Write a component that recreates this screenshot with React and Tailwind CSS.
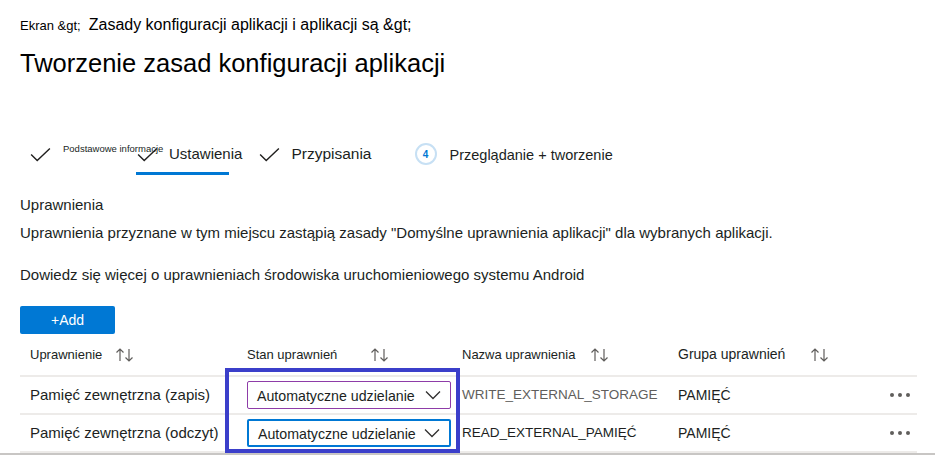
import React from 'react';

const Check = ({ className }) => (
  <svg viewBox="0 0 22 16" className={className} fill="none" stroke="#201f1e" strokeWidth="1.5">
    <polyline points="1,8 7.5,14.5 21,1.5" />
  </svg>
);

const SortIcon = () => (
  <svg viewBox="0 0 20 16" className="w-[20px] h-[16px]" fill="none" stroke="#605e5c" strokeWidth="1.2">
    <path d="M5 14 V2 M1.5 5.5 L5 2 L8.5 5.5" />
    <path d="M14 2 V14 M10.5 10.5 L14 14 L17.5 10.5" />
  </svg>
);

const Chevron = () => (
  <svg viewBox="0 0 16 10" className="w-[16px] h-[10px]" fill="none" stroke="#323130" strokeWidth="1.3">
    <polyline points="1,1.5 8,8.5 15,1.5" />
  </svg>
);

const Dots = () => (
  <div className="flex gap-[4px]">
    <span className="w-[4px] h-[4px] rounded-full bg-[#605e5c]" />
    <span className="w-[4px] h-[4px] rounded-full bg-[#605e5c]" />
    <span className="w-[4px] h-[4px] rounded-full bg-[#605e5c]" />
  </div>
);

const rows = [
  { name: 'Pamięć zewnętrzna (zapis)', perm: 'WRITE_EXTERNAL_STORAGE', permColor: 'text-[#605e5c]', group: 'PAMIĘĆ', border: 'border-[1.5px] border-[#8e3ca8]' },
  { name: 'Pamięć zewnętrzna (odczyt)', perm: 'READ_EXTERNAL_PAMIĘĆ', permColor: 'text-[#201f1e]', group: 'PAMIĘĆ', border: 'border-2 border-[#0078d4]' },
];

export default function App() {
  return (
    <div className="w-[935px] h-[455px] overflow-hidden bg-white text-[#000] pt-[13px]" style={{ fontFamily: '"Liberation Sans", Arial, sans-serif' }}>
      <div className="pl-[20px]">
        <div className="flex items-baseline h-[22px]">
          <span className="text-[13px]">Ekran &amp;gt;</span>
          <span className="text-[16px] ml-[8px]">Zasady konfiguracji aplikacji i aplikacji są &amp;gt;</span>
        </div>

        <h1 className="text-[25.5px] leading-[30px] mt-[13px]">Tworzenie zasad konfiguracji aplikacji</h1>

        <div className="flex items-center h-[40px] mt-[56px]">
          <Check className="w-[21px] h-[15px] ml-[10px]" />
          <span className="text-[9.5px] ml-[12px] w-[72px] whitespace-nowrap self-start mt-[8px] text-[#201f1e]">Podstawowe informacje</span>
          <div className="relative flex items-center h-full">
            <Check className="w-[21px] h-[15px] ml-[2px]" />
            <span className="text-[15px] ml-[11px] mt-[1px] text-[#201f1e]">Ustawienia</span>
            <div className="absolute left-[1px] bottom-[-1px] w-[93px] h-[3px] bg-[#0078d4]" />
          </div>
          <Check className="w-[21px] h-[15px] ml-[17px]" />
          <span className="text-[15.5px] ml-[11px] text-[#201f1e]">Przypisania</span>
          <div className="ml-[43px] w-[22px] h-[22px] rounded-full border-2 border-[#c7e0f4] flex items-center justify-center">
            <span className="text-[10px] font-bold text-[#0078d4]">4</span>
          </div>
          <span className="text-[14.5px] ml-[13px] mt-[4px] text-[#201f1e]">Przeglądanie + tworzenie</span>
        </div>

        <div className="mt-[21px] text-[15px] text-[#201f1e]">
          <p className="leading-[20px]">Uprawnienia</p>
          <p className="leading-[20px] mt-[8px]">Uprawnienia przyznane w tym miejscu zastąpią zasady "Domyślne uprawnienia aplikacji" dla wybranych aplikacji.</p>
          <p className="leading-[20px] mt-[22px]">Dowiedz się więcej o uprawnieniach środowiska uruchomieniowego systemu Android</p>
        </div>

        <button className="mt-[21px] w-[95px] h-[28px] rounded-[2px] bg-[#0078d4] text-white text-[14px] flex items-center justify-center">+Add</button>

        <div className="relative w-[897px] text-[13px] text-[#201f1e]">
          <div className="grid grid-cols-[204px_238px_216px_212px_1fr] h-[43px] items-center border-b-2 border-[#edebe9]">
            <div className="flex items-center pl-[10px]"><span className="w-[85px]">Uprawnienie</span><SortIcon /></div>
            <div className="flex items-center pl-[23px]"><span className="w-[123px]">Stan uprawnień</span><SortIcon /></div>
            <div className="flex items-center"><span className="w-[128px]">Nazwa uprawnienia</span><SortIcon /></div>
            <div className="flex items-center"><span className="w-[132px] text-[14px]">Grupa uprawnień</span><SortIcon /></div>
            <div />
          </div>
          {rows.map((r, i) => (
            <div key={i} className="grid grid-cols-[204px_238px_216px_212px_1fr] h-[38px] items-center border-b-2 border-[#edebe9] text-[15px]">
              <div className="pl-[10px] whitespace-nowrap">{r.name}</div>
              <div className="pl-[23px]">
                <div className={`w-[204px] h-[28px] ${r.border} rounded-[2px] flex items-center justify-between pl-[9px] pr-[9px]`}>
                  <span className="text-[14.2px] mt-[4px] text-[#201f1e]">Automatyczne udzielanie</span>
                  <Chevron />
                </div>
              </div>
              <div className={`whitespace-nowrap text-[13.5px] ${r.permColor}`}>{r.perm}</div>
              <div className="text-[14px]">{r.group}</div>
              <div><Dots /></div>
            </div>
          ))}
          <div className="absolute left-[205px] top-[34px] w-[235px] h-[85px] border-4 border-[#3b3fca] pointer-events-none" />
        </div>
      </div>
      <div className="h-[2px] w-full bg-[#c8c6c4]" />
    </div>
  );
}
